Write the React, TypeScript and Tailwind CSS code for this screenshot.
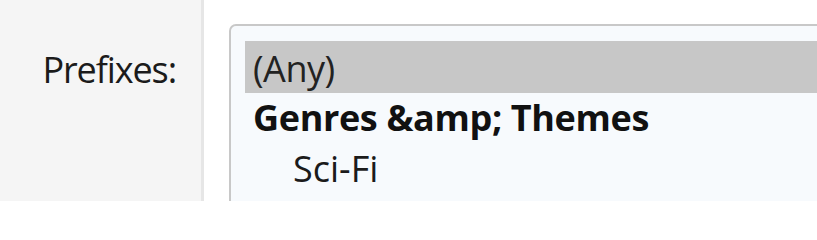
import React from "react";

export default function App() {
  return (
    <div className="flex h-[201px] w-[817px] overflow-hidden bg-white font-['Open_Sans',sans-serif] text-[36px] leading-[49px] text-[#1b1b1b]">
      <div className="w-[201px] shrink-0 bg-[#f5f5f5] pt-[44.5px] pr-[25px] text-right tracking-[-1.1px]">
        Prefixes:
      </div>
      <div className="w-[3px] shrink-0 bg-[#e6e6e6]" />
      <div className="min-w-0 flex-1 pl-[25px] pt-[24px]">
        <div className="h-[260px] w-[640px] rounded-[7px] border-[2.5px] border-[#c8c8c8] bg-[#f7fafd] pl-[14px] pt-[14.5px]">
          <div className="h-[52px] bg-[#c7c7c7] pl-[8px] pt-[3.5px] tracking-[-0.5px] text-[#222]">(Any)</div>
          <div className="h-[51px] pl-[8px] pt-[0.5px] font-bold tracking-[-0.35px] text-[#111]">
            Genres &amp;amp; Themes
          </div>
          <div className="h-[52px] pl-[48px] pt-[0.5px]">Sci-Fi</div>
        </div>
      </div>
    </div>
  );
}
